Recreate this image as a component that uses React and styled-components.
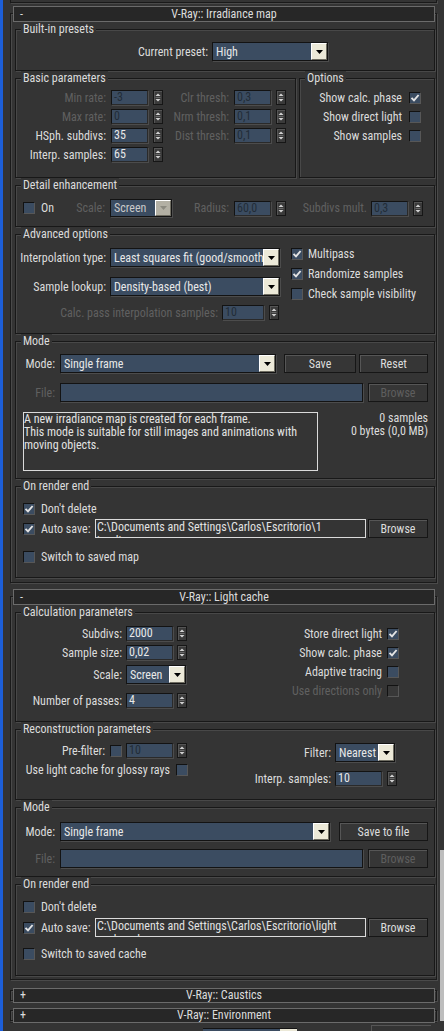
import React from 'react';
import styled, { createGlobalStyle } from 'styled-components';

const FONT = `"Roboto Condensed", "Noto Sans", "Liberation Sans", Arial, sans-serif`;

const GlobalStyle = createGlobalStyle`
  *, *::before, *::after { box-sizing: border-box; }
  html, body { margin: 0; padding: 0; background: #343434; }
  body { font-family: ${FONT}; font-stretch: condensed; font-size: 12px; color: #dcdcdc; }
`;

const Screen = styled.div`
  display: flex;
  width: 444px;
  height: 1031px;
  overflow: hidden;
  background: #343434;
`;

const BlueEdge = styled.div`
  flex: none;
  width: 3px;
  background: #1d5fd9;
`;

const Main = styled.div`
  flex: none;
  width: 434px;
  padding-left: 7px;
  display: flex;
  flex-direction: column;
`;

const ScrollTrack = styled.div`
  flex: none;
  width: 7px;
  padding: 850px 0 0 3px;
`;

const ScrollThumb = styled.div`
  height: 171px;
  background: #bdbdbd;
`;

const TopStub = styled.div`
  height: 3px;
  border: 1px solid #1a1a1a;
  border-top: none;
  box-shadow: 1px 1px 0 #4a4a4a;
`;

const Frame = styled.div`
  margin-top: ${p => p.$mt}px;
  border: 1px solid #1a1a1a;
  box-shadow: inset 1px 1px 0 #4a4a4a, 1px 1px 0 #4a4a4a;
  padding: 0 1px ${p => p.$pb}px 2px;
`;

const RollHeader = styled.div`
  margin: ${p => (p.$collapsed ? '-3px 0 -3px' : '-8px 0 0')};
  height: ${p => (p.$collapsed ? 15 : 16)}px;
  border: 1px solid #6b6b6b;
  background: #272727;
  display: grid;
  grid-template-columns: 22px 1fr 22px;
  align-items: center;
  line-height: 13px;
  color: #dcdcdc;
  position: relative;
`;

const Toggle = styled.span`
  padding-left: 6px;
`;

const Title = styled.span`
  text-align: center;
`;

const Body = styled.div`
  padding-left: 2px;
  display: flex;
  flex-direction: column;
`;

const GroupRow = styled.div`
  display: flex;
  gap: 3px;
`;

const Group = styled.fieldset`
  margin: 0;
  min-width: 0;
  padding: ${p => p.$pad};
  border: 1px solid #181818;
  box-shadow: inset 1px 1px 0 #484848, 1px 1px 0 #484848;
  flex: ${p => (p.$w ? `0 0 ${p.$w}px` : '1 1 auto')};
`;

const Legend = styled.legend`
  margin-left: 5px;
  padding: 0 2px;
  line-height: 14px;
  background: #343434;
  color: #dcdcdc;
`;

const Row = styled.div`
  display: flex;
  align-items: ${p => p.$align || 'center'};
  height: ${p => (p.$h ? `${p.$h}px` : 'auto')};
  margin-top: ${p => p.$mt || 0}px;
`;

const Split = styled.div`
  display: flex;
  align-items: flex-start;
`;

const Col = styled.div`
  display: flex;
  flex-direction: column;
  align-items: ${p => (p.$end ? 'flex-end' : 'flex-start')};
  margin-left: ${p => (p.$ml === 'auto' ? 'auto' : `${p.$ml || 0}px`)};
  margin-top: ${p => p.$mt || 0}px;
  padding-top: ${p => p.$pt || 0}px;
  padding-right: ${p => p.$pr || 0}px;
`;

const BasicGrid = styled.div`
  display: grid;
  grid-template-columns: 147px 123px;
  row-gap: 4px;
`;

const Label = styled.span`
  flex: none;
  width: ${p => (p.$w ? `${p.$w}px` : 'auto')};
  margin-left: ${p => p.$ml || 0}px;
  text-align: ${p => (p.$left ? 'left' : 'right')};
  white-space: nowrap;
  line-height: 14px;
  color: ${p => (p.$off ? '#606060' : '#dcdcdc')};
`;

const NumBox = styled.span`
  flex: none;
  width: ${p => p.$w}px;
  height: 15px;
  margin-left: ${p => p.$ml || 0}px;
  padding-left: 2px;
  background: #3b4c61;
  border: 1px solid #131313;
  border-right-color: #2a2a2a;
  border-bottom-color: #2a2a2a;
  box-shadow: 1px 1px 0 #4c4c4c;
  line-height: 13px;
  white-space: nowrap;
  overflow: hidden;
  color: ${p => (p.$off ? '#222c38' : '#e8e8e8')};
`;

const SpinBox = styled.span`
  flex: none;
  display: block;
  width: 10px;
  height: 15px;
  margin-left: ${p => p.$ml || 0}px;
  background: #3a3a3a;
  border: 1px solid #161616;
  box-shadow: inset 1px 1px 0 #555;
`;

const SelectBox = styled.span`
  flex: none;
  display: flex;
  width: ${p => p.$w}px;
  height: ${p => p.$h}px;
  margin-left: ${p => p.$ml || 0}px;
  background: #3b4c61;
  border: 1px solid #131313;
  box-shadow: 1px 1px 0 #4c4c4c;
`;

const SelectText = styled.span`
  flex: 1;
  min-width: 0;
  padding-left: 3px;
  overflow: hidden;
  white-space: nowrap;
  display: flex;
  align-items: center;
  color: ${p => (p.$dim ? '#c9c9c9' : '#e8e8e8')};
`;

const ArrowBtn = styled.span`
  flex: none;
  width: 16px;
  display: flex;
  align-items: center;
  justify-content: center;
  background: ${p => (p.$off ? '#b3b0a4' : '#ece9d8')};
  border: 1px solid;
  border-color: #ffffff #6f6d62 #6f6d62 #ffffff;
`;

const CheckBox = styled.span`
  flex: none;
  width: 12px;
  height: 12px;
  margin-left: ${p => p.$ml || 0}px;
  display: flex;
  align-items: center;
  justify-content: center;
  background: ${p => (p.$off ? '#383838' : '#3b4c61')};
  border: 1px solid #121212;
  border-right-color: #575757;
  border-bottom-color: #575757;
`;

const Button = styled.span`
  flex: none;
  width: ${p => p.$w}px;
  height: 19px;
  margin-left: ${p => p.$ml || 0}px;
  display: flex;
  align-items: center;
  justify-content: center;
  background: #363636;
  border: 1px solid #161616;
  box-shadow: inset 1px 1px 0 #565656;
  color: ${p => (p.$off ? '#5e5e5e' : '#dcdcdc')};
`;

const FileField = styled.span`
  flex: none;
  width: ${p => p.$w}px;
  height: 19px;
  margin-left: ${p => p.$ml || 0}px;
  background: #3b4c61;
  border: 1px solid #131313;
  box-shadow: 1px 1px 0 #4c4c4c;
`;

const PathBox = styled.span`
  flex: none;
  width: 271px;
  height: 19px;
  margin-left: 2px;
  padding-left: 1px;
  border: 1px solid #dadada;
  overflow: hidden;
  line-height: 14px;
  color: #e2e2e2;
`;

const Line = styled.span`
  display: block;
  white-space: nowrap;
`;

const InfoBox = styled.div`
  flex: none;
  width: 295px;
  height: 59px;
  margin-left: 7px;
  border: 1px solid #dadada;
  line-height: 13px;
  color: #e2e2e2;
`;

const Stats = styled.div`
  flex: 1;
  padding-right: 6px;
  text-align: right;
  line-height: 13px;
  color: #dcdcdc;
`;

const BottomBar = styled.div`
  flex: none;
  height: 9px;
  margin-top: 1px;
  display: flex;
  align-items: flex-start;
  border-top: 1px solid #262626;
`;

const StubSelect = styled.span`
  flex: none;
  display: flex;
  width: 94px;
  height: 4px;
  margin: 5px 0 0 193px;
  background: #3b4c61;
  border-top: 1px solid #131313;
`;

const StubArrow = styled.span`
  margin-left: auto;
  width: 17px;
  background: #ece9d8;
`;

const StubPanel = styled.span`
  flex: none;
  width: 60px;
  height: 7px;
  margin: 2px 0 0 74px;
  border-top: 1px solid #555;
  border-left: 1px solid #555;
`;

function Spinner({ ml = 5 }) {
  return (
    <SpinBox $ml={ml}>
      <svg width="8" height="13" viewBox="0 0 8 13">
        <path d="M1.5 5 L4 2.5 L6.5 5 Z" fill="#d2d2d2" />
        <path d="M1.5 6.5 H6.5" stroke="#6a6a6a" strokeWidth="1" />
        <path d="M1.5 8 L6.5 8 L4 10.5 Z" fill="#d2d2d2" />
      </svg>
    </SpinBox>
  );
}

function Select({ w, h = 19, ml, value, arrowOff, dim }) {
  return (
    <SelectBox $w={w} $h={h} $ml={ml}>
      <SelectText $dim={dim}>{value}</SelectText>
      <ArrowBtn $off={arrowOff}>
        <svg width="7" height="4" viewBox="0 0 7 4">
          <path d="M0 0 H7 L3.5 4 Z" fill={arrowOff ? '#8c8a80' : '#000'} />
        </svg>
      </ArrowBtn>
    </SelectBox>
  );
}

function Check({ checked, off, ml }) {
  return (
    <CheckBox $off={off} $ml={ml}>
      {checked && (
        <svg width="10" height="10" viewBox="0 0 10 10">
          <path d="M1.5 4.8 L4 7.4 L8.6 2" fill="none" stroke="#e4e4e4" strokeWidth="1.9" />
        </svg>
      )}
    </CheckBox>
  );
}

function Field({ label, lw, value, iw = 37, off, gap = 5, sgap = 5, mt }) {
  return (
    <Row $mt={mt}>
      <Label $w={lw} $off={off}>{label}</Label>
      <NumBox $w={iw} $ml={gap} $off={off}>{value}</NumBox>
      <Spinner ml={sgap} />
    </Row>
  );
}

function CheckLeft({ label, checked, h = 19, ml = 7, gap = 6 }) {
  return (
    <Row $h={h}>
      <Check checked={checked} ml={ml} />
      <Label $left $ml={gap}>{label}</Label>
    </Row>
  );
}

function CheckRight({ label, checked, off, gap = 7, h = 19 }) {
  return (
    <Row $h={h}>
      <Label $off={off}>{label}</Label>
      <Check checked={checked} off={off} ml={gap} />
    </Row>
  );
}

function RenderEnd({ pad, dontDelete, lines, switchLabel, gap1, gap2 }) {
  return (
    <Group $pad={pad}>
      <Legend>On render end</Legend>
      <CheckLeft label="Don't delete" checked={dontDelete} />
      <Row $mt={gap1} $h={19}>
        <Check checked ml={7} />
        <Label $left $w={52} $ml={6}>Auto save:</Label>
        <PathBox>
          <Line>{lines[0]}</Line>
          <Line>{lines[1]}</Line>
        </PathBox>
        <Button $w={60} $ml={2}>Browse</Button>
      </Row>
      <Row $mt={gap2} $h={19}>
        <Check ml={7} />
        <Label $left $ml={6}>{switchLabel}</Label>
      </Row>
    </Group>
  );
}

function Header({ sign, title, collapsed }) {
  return (
    <RollHeader $collapsed={collapsed}>
      <Toggle>{sign}</Toggle>
      <Title>{title}</Title>
      <span />
    </RollHeader>
  );
}

export default function App() {
  return (
    <>
      <GlobalStyle />
      <Screen>
        <BlueEdge />
        <Main>
          <TopStub />

          <Frame $mt={10} $pb={4}>
            <Header sign="-" title="V-Ray:: Irradiance map" />
            <Body>
              <Group $pad="6px 0 9px 0">
                <Legend>Built-in presets</Legend>
                <Row>
                  <Label $w={192}>Current preset:</Label>
                  <Select w={116} ml={4} value="High" />
                </Row>
              </Group>

              <GroupRow>
                <Group $w={281} $pad="5px 0 15px 0">
                  <Legend>Basic parameters</Legend>
                  <BasicGrid>
                    <Field label="Min rate:" lw={90} value="-3" off />
                    <Field label="Clr thresh:" lw={66} value="0,3" off />
                    <Field label="Max rate:" lw={90} value="0" off />
                    <Field label="Nrm thresh:" lw={66} value="0,1" off />
                    <Field label="HSph. subdivs:" lw={90} value="35" />
                    <Field label="Dist thresh:" lw={66} value="0,1" off />
                    <Field label="Interp. samples:" lw={90} value="65" />
                  </BasicGrid>
                </Group>
                <Group $w={136} $pad="3px 13px 0 0">
                  <Legend>Options</Legend>
                  <Col $end>
                    <CheckRight label="Show calc. phase" checked />
                    <CheckRight label="Show direct light" />
                    <CheckRight label="Show samples" />
                  </Col>
                </Group>
              </GroupRow>

              <Group $pad="7px 0 9px 0">
                <Legend>Detail enhancement</Legend>
                <Row>
                  <Check ml={7} />
                  <Label $left $w={20} $ml={6}>On</Label>
                  <Label $w={44} $off>Scale:</Label>
                  <Select w={62} h={18} ml={5} value="Screen" arrowOff dim />
                  <Label $w={57} $off>Radius:</Label>
                  <NumBox $w={37} $ml={5} $off>60,0</NumBox>
                  <Spinner />
                  <Label $w={81} $off>Subdivs mult.</Label>
                  <NumBox $w={37} $ml={4} $off>0,3</NumBox>
                  <Spinner />
                </Row>
              </Group>

              <Group $pad="3px 0 13px 0">
                <Legend>Advanced options</Legend>
                <Split>
                  <Col $pt={4}>
                    <Row>
                      <Label $w={90}>Interpolation type:</Label>
                      <Select w={170} ml={4} value="Least squares fit (good/smooth)" />
                    </Row>
                    <Row $mt={10}>
                      <Label $w={90}>Sample lookup:</Label>
                      <Select w={170} ml={4} value="Density-based (best)" />
                    </Row>
                    <Field label="Calc. pass interpolation samples:" lw={202} iw={42} gap={4} value="10" off mt={9} />
                  </Col>
                  <Col $ml={11}>
                    <CheckLeft label="Multipass" checked h={20} ml={0} gap={5} />
                    <CheckLeft label="Randomize samples" checked h={20} ml={0} gap={5} />
                    <CheckLeft label="Check sample visibility" h={20} ml={0} gap={5} />
                  </Col>
                </Split>
              </Group>

              <Group $pad="6px 0 7px 0">
                <Legend>Mode</Legend>
                <Row>
                  <Label $w={39}>Mode:</Label>
                  <Select w={216} ml={5} value="Single frame" />
                  <Button $w={72} $ml={8}>Save</Button>
                  <Button $w={69} $ml={3}>Reset</Button>
                </Row>
                <Row $mt={10}>
                  <Label $w={39} $off>File:</Label>
                  <FileField $w={303} $ml={5} />
                  <Button $w={60} $ml={5} $off>Browse</Button>
                </Row>
                <Row $mt={10} $align="flex-start">
                  <InfoBox>
                    <Line>A new irradiance map is created for each frame.</Line>
                    <Line>This mode is suitable for still images and animations with</Line>
                    <Line>moving objects.</Line>
                  </InfoBox>
                  <Stats>
                    <Line>0 samples</Line>
                    <Line>0 bytes (0,0 MB)</Line>
                  </Stats>
                </Row>
              </Group>

              <RenderEnd
                pad="6px 0 11px 0"
                dontDelete
                lines={['C:\\Documents and Settings\\Carlos\\Escritorio\\1', 'irradiance.vrmap']}
                switchLabel="Switch to saved map"
                gap1={1}
                gap2={9}
              />
            </Body>
          </Frame>

          <Frame $mt={13} $pb={3}>
            <Header sign="-" title="V-Ray:: Light cache" />
            <Body>
              <Group $pad="7px 0 13px 0">
                <Legend>Calculation parameters</Legend>
                <Split>
                  <Col>
                    <Field label="Subdivs:" lw={106} iw={47} gap={4} sgap={4} value="2000" />
                    <Field label="Sample size:" lw={106} iw={47} gap={4} sgap={4} value="0,02" mt={4} />
                    <Row $mt={5}>
                      <Label $w={106}>Scale:</Label>
                      <Select w={60} ml={4} value="Screen" />
                    </Row>
                    <Field label="Number of passes:" lw={106} iw={47} gap={4} sgap={4} value="4" mt={9} />
                  </Col>
                  <Col $ml="auto" $mt={-2} $pr={35} $end>
                    <CheckRight label="Store direct light" checked gap={5} />
                    <CheckRight label="Show calc. phase" checked gap={5} />
                    <CheckRight label="Adaptive tracing" gap={5} />
                    <CheckRight label="Use directions only" off gap={5} />
                  </Col>
                </Split>
              </Group>

              <Group $pad="7px 0 13px 0">
                <Legend>Reconstruction parameters</Legend>
                <Split>
                  <Col>
                    <Row>
                      <Label $w={89}>Pre-filter:</Label>
                      <Check ml={5} />
                      <NumBox $w={47} $ml={4} $off>10</NumBox>
                      <Spinner ml={4} />
                    </Row>
                    <Row $mt={5}>
                      <Label $w={154}>Use light cache for glossy rays</Label>
                      <Check ml={6} />
                    </Row>
                  </Col>
                  <Col $ml={12}>
                    <Row>
                      <Label $w={131}>Filter:</Label>
                      <Select w={60} ml={4} value="Nearest" />
                    </Row>
                    <Field label="Interp. samples:" lw={131} iw={47} gap={4} value="10" mt={9} />
                  </Col>
                </Split>
              </Group>

              <Group $pad="8px 0 8px 0">
                <Legend>Mode</Legend>
                <Row>
                  <Label $w={39}>Mode:</Label>
                  <Select w={270} ml={5} value="Single frame" />
                  <Button $w={89} $ml={9}>Save to file</Button>
                </Row>
                <Row $mt={8}>
                  <Label $w={39} $off>File:</Label>
                  <FileField $w={303} $ml={5} />
                  <Button $w={60} $ml={5} $off>Browse</Button>
                </Row>
              </Group>

              <RenderEnd
                pad="6px 0 12px 0"
                lines={['C:\\Documents and Settings\\Carlos\\Escritorio\\light', 'cache.vrlmap']}
                switchLabel="Switch to saved cache"
                gap1={2}
                gap2={7}
              />
            </Body>
          </Frame>

          <Frame $mt={10} $pb={0}>
            <Header sign="+" title="V-Ray:: Caustics" collapsed />
          </Frame>
          <Frame $mt={9} $pb={0}>
            <Header sign="+" title="V-Ray:: Environment" collapsed />
          </Frame>

          <BottomBar>
            <StubSelect>
              <StubArrow />
            </StubSelect>
            <StubPanel />
          </BottomBar>
        </Main>
        <ScrollTrack>
          <ScrollThumb />
        </ScrollTrack>
      </Screen>
    </>
  );
}
